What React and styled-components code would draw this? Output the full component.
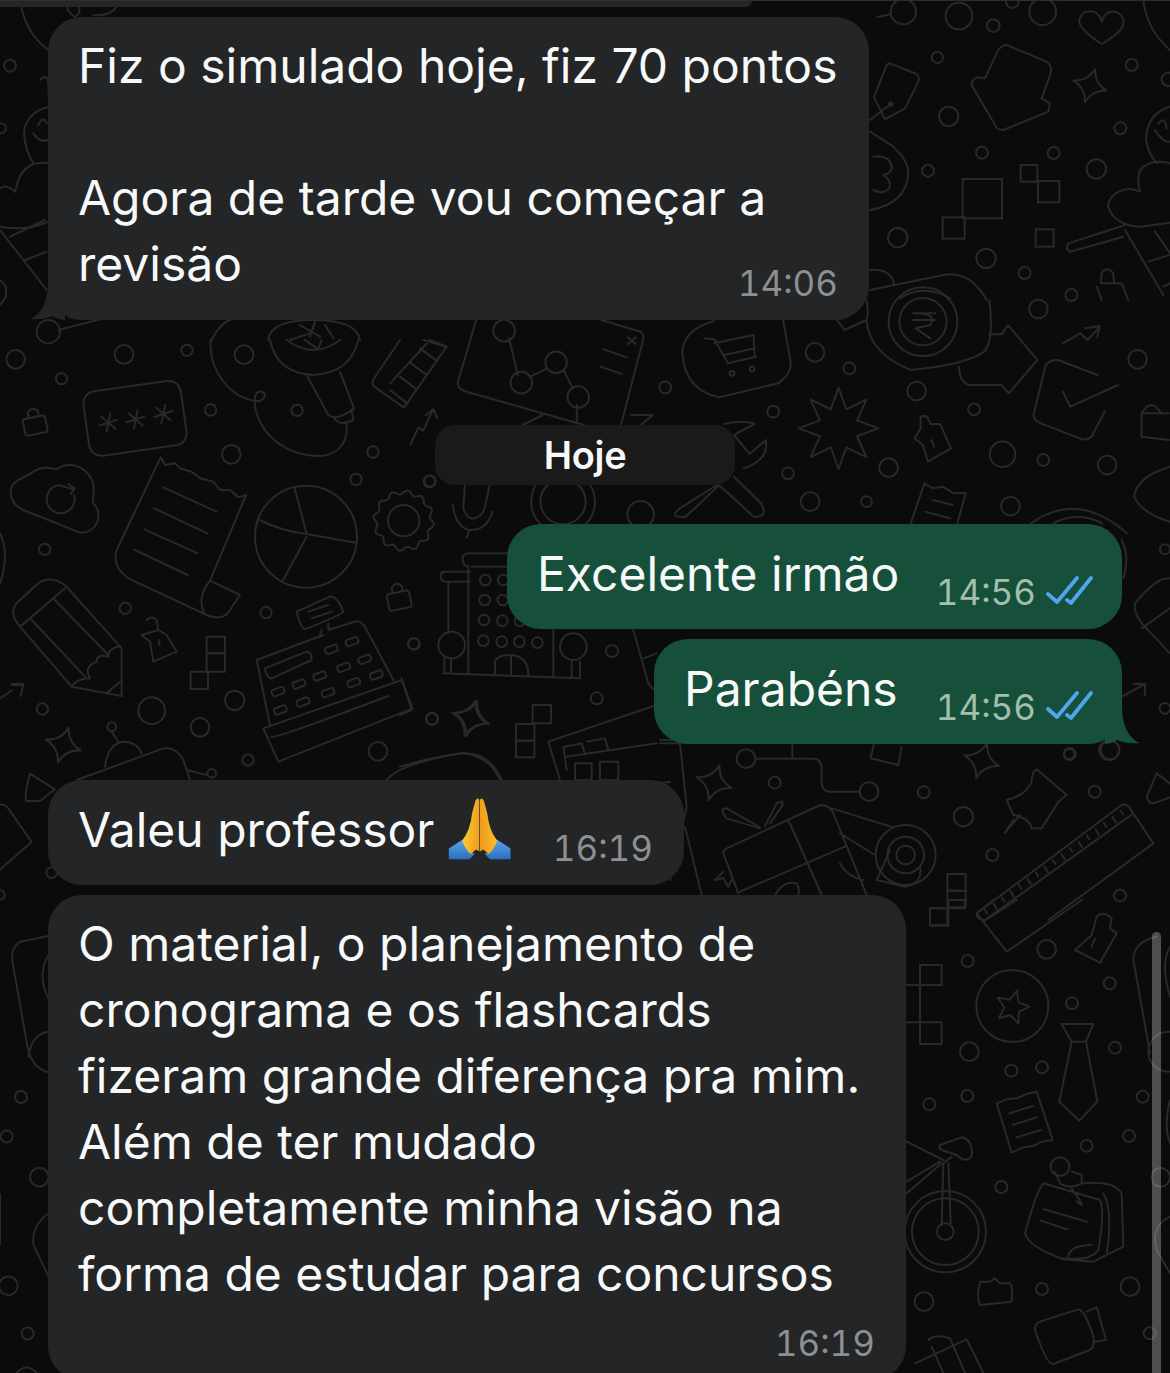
import React from "react";
import styled, { createGlobalStyle } from "styled-components";

const Global = createGlobalStyle`
  html, body { margin: 0; padding: 0; background: #0b0b0c; }
`;

const Page = styled.div`
  position: relative;
  width: 1170px;
  height: 1373px;
  overflow: hidden;
  background: #0b0b0c;
  font-family: Inter, "Liberation Sans", sans-serif;
  color: #fff;
`;

const Wallpaper = styled.svg`
  position: absolute;
  inset: 0;
  width: 1170px;
  height: 1373px;
  fill: none;
  stroke: #29292a;
  stroke-width: 2;
  stroke-linecap: round;
  stroke-linejoin: round;
  * { vector-effect: non-scaling-stroke; }
`;

const Chat = styled.main`
  position: relative;
  display: flex;
  flex-direction: column;
  padding: 0 48px;
  border-top: 1px solid #2e2e30;
`;

const PreviousEdge = styled.div`
  width: 752px;
  height: 6px;
  margin-left: -48px;
  background: #232527;
  border-radius: 0 0 24px 0;
`;

const Bubble = styled.article`
  position: relative;
  box-sizing: border-box;
  width: ${(p) => p.$w}px;
  margin-top: ${(p) => p.$top}px;
  align-self: ${(p) => (p.$out ? "flex-end" : "flex-start")};
  padding: ${(p) => (p.$pt ? p.$pt : 17)}px ${(p) => (p.$out ? 29 : 31)}px ${(p) => p.$pb || 22}px 31px;
  background: ${(p) => (p.$out ? "#16503a" : "#232527")};
  border-radius: 34px;
`;

const Line = styled.div`
  font-size: 48px;
  line-height: 66px;
  height: 66px;
  margin-left: -1px;
  white-space: nowrap;
  color: #f7f8f8;
`;

const Row = styled.div`
  display: flex;
  justify-content: space-between;
  align-items: flex-end;
`;

const MetaRow = styled.div`
  display: flex;
  justify-content: flex-end;
  margin-top: 18px;
`;

const Meta = styled.div`
  display: flex;
  align-items: center;
  gap: 10px;
  height: 36px;
  margin-bottom: ${(p) => p.$drop || 0}px;
`;

const Time = styled.span`
  font-size: 35px;
  line-height: 36px;
  font-variant-numeric: tabular-nums;
  letter-spacing: 0;
  color: ${(p) => (p.$out ? "#a2bfae" : "#8d8f90")};
`;

const Ticks = styled.svg`
  width: 47px;
  height: 30px;
  margin-top: -4px;
  fill: none;
  stroke: #4fa6ec;
  stroke-width: 3.8;
  stroke-linecap: round;
  stroke-linejoin: round;
`;

const Tail = styled.svg`
  position: absolute;
  bottom: 0;
  width: 34px;
  height: 40px;
  ${(p) => (p.$right ? "right: -17px;" : "left: -17px;")}
  fill: ${(p) => (p.$right ? "#16503a" : "#232527")};
`;

const DayPill = styled.div`
  align-self: center;
  box-sizing: border-box;
  width: 300px;
  height: 60px;
  margin-top: 105px;
  margin-bottom: 39px;
  border-radius: 20px;
  background: #1a1a1b;
  display: flex;
  align-items: center;
  justify-content: center;
  font-size: 38px;
  font-weight: 600;
  letter-spacing: -0.3px;
  color: #f7f8f8;
`;

const Emoji = styled.svg`
  width: 65px;
  height: 63px;
  margin-left: 13px;
  flex: none;
  align-self: flex-start;
`;

const TextGroup = styled.div`
  display: flex;
  align-items: flex-start;
`;

const ScrollThumb = styled.div`
  position: absolute;
  left: 1152px;
  top: 932px;
  width: 9px;
  height: 460px;
  border-radius: 5px 5px 0 0;
  background: rgba(255, 255, 255, 0.28);
`;

/* ---------- doodle helpers ---------- */
const burst = (cx, cy, R, r, n, rot = 0, squeeze = 1) => {
  let s = "";
  for (let i = 0; i < n * 2; i++) {
    const a = rot + (i * Math.PI) / n;
    const q = i % 2 ? r : R;
    s += `${i ? "L" : "M"}${(cx + squeeze * q * Math.cos(a)).toFixed(1)} ${(cy + q * Math.sin(a)).toFixed(1)} `;
  }
  return s + "Z ";
};
const gear = (cx, cy, R, amp, n) => {
  let s = "";
  for (let i = 0; i <= 180; i++) {
    const a = (i / 180) * Math.PI * 2;
    const q = R + amp * Math.sin(a * n);
    s += `${i ? "L" : "M"}${(cx + q * Math.cos(a)).toFixed(1)} ${(cy + q * Math.sin(a)).toFixed(1)} `;
  }
  return s + "Z ";
};
const spark = (cx, cy, s, rot = 0.2) => {
  let out = "";
  for (let i = 0; i < 4; i++) {
    const a = rot + (i * Math.PI) / 2;
    const b = a + Math.PI / 2;
    const x1 = cx + s * Math.cos(a), y1 = cy + s * Math.sin(a);
    const x2 = cx + s * Math.cos(b), y2 = cy + s * Math.sin(b);
    const mx = cx + s * 0.2 * Math.cos(a + Math.PI / 4) * 1.4, my = cy + s * 0.2 * Math.sin(a + Math.PI / 4) * 1.4;
    out += `${i ? "" : `M${x1.toFixed(1)} ${y1.toFixed(1)} `}Q${mx.toFixed(1)} ${my.toFixed(1)} ${x2.toFixed(1)} ${y2.toFixed(1)} `;
  }
  return out + "Z ";
};
const rrect = (x, y, w, h, r, tilt) => {
  const c = Math.cos(tilt), sn = Math.sin(tilt);
  const T = (a, b) => `${(x + a * c - b * sn).toFixed(1)} ${(y + a * sn + b * c).toFixed(1)}`;
  const W = w / 2, H = h / 2;
  return `M${T(-W + r, -H)} L${T(W - r, -H)} Q${T(W, -H)} ${T(W, -H + r)} L${T(W, H - r)} Q${T(W, H)} ${T(W - r, H)} L${T(-W + r, H)} Q${T(-W, H)} ${T(-W, H - r)} L${T(-W, -H + r)} Q${T(-W, -H)} ${T(-W + r, -H)} Z `;
};
const lock = (x, y, k = 1, tilt = -0.2) => {
  const c = Math.cos(tilt), sn = Math.sin(tilt);
  const T = (a, b) => `${(x + k * (a * c - b * sn)).toFixed(1)} ${(y + k * (a * sn + b * c)).toFixed(1)}`;
  return rrect(x + k * 4 * sn * -1, y + k * 8, 80 * k, 60 * k, 10 * k, tilt) + `M${T(-18, -22)} L${T(-18, -42)} Q${T(0, -62)} ${T(18, -42)} L${T(18, -22)} `;
};
const aster = (x, y, r) => {
  let s = "";
  for (let i = 0; i < 3; i++) {
    const a = -0.2 + (i * Math.PI) / 3;
    s += `M${(x - r * Math.sin(a)).toFixed(1)} ${(y - r * Math.cos(a)).toFixed(1)} L${(x + r * Math.sin(a)).toFixed(1)} ${(y + r * Math.cos(a)).toFixed(1)} `;
  }
  return s;
};
const rulerTicks = () => {
  let s = "";
  for (let i = 0; i < 17; i++) {
    const x = 975 + i * 25.5, y = 510 - i * 18.6;
    s += `M${x.toFixed(1)} ${y.toFixed(1)} l${i % 2 ? 10 : 7} ${i % 2 ? 16 : 11} `;
  }
  return s;
};

const Layer = ({ x, y, sx, sy, d, c = [], r = [] }) => {
  const vert = sy || sx;
  return (
    <g transform={`translate(${x} ${y}) scale(${sx} ${vert})`}>
      <path d={d} />
      {c.map(([cx, cy, rr], i) => (
        <ellipse key={"c" + i} cx={cx} cy={cy} rx={rr} ry={(rr * sx) / vert} />
      ))}
      {r.map(([rx, ry, w, h, rot], i) => (
        <rect key={"r" + i} x={rx} y={ry} width={w} height={h} rx={rot === undefined ? 0 : 7} transform={rot ? `rotate(${rot} ${rx + w / 2} ${ry + h / 2})` : undefined} />
      ))}
    </g>
  );
};

const keys = [
  [815, 1045, -20], [878, 1022, -20], [940, 998, -20], [1012, 972, -20], [1075, 948, -20], [975, 918, -20], [1037, 895, -20],
  [822, 1100, -20], [890, 1076, -20], [965, 1048, -20], [1042, 1018, -20], [1110, 995, -20],
].map(([a, b, t]) => [a, b, 38, 20, t]);

const DOODLES = [
  { /* left top */
    x: 0, y: 0, sx: 1 / 3,
    d: "M60 0 Q75 100 145 150 M195 0 Q200 40 225 50 Q245 40 235 15 M280 45 Q330 50 350 20 M145 320 Q75 340 72 400 Q75 450 100 490 M100 400 Q120 430 145 420 M115 375 Q130 345 140 370 M145 490 Q80 480 55 540 L45 575 Q15 550 0 565 M0 680 Q80 695 145 665 M0 690 L140 870 M30 710 L135 660 M75 780 L140 755 M0 840 L18 860 L18 890 L0 915 M120 240 Q150 210 145 280 M175 990 L330 950 M635 1020 Q660 970 690 960 M805 1020 Q810 960 940 960 Q1070 960 1080 1020 M870 1020 L930 1000 M900 975 L960 1010 M945 965 L930 1010 M975 975 L1000 1015",
    c: [[30, 197, 18], [3, 385, 15], [145, 995, 35]],
  },
  { /* left middle */
    x: 0, y: 340, sx: 1 / 3,
    d:
      lock(105, 250, 0.85) +
      rrect(405, 235, 295, 195, 42, -0.14) +
      aster(325, 248, 28) + aster(407, 238, 28) + aster(490, 222, 28) +
      "M632 0 C625 90 690 175 770 183 C790 185 805 160 785 155 C760 150 760 190 770 220 C790 290 860 345 950 348 C1000 350 1045 320 1040 255 " +
      "M810 0 Q830 100 940 105 Q1050 100 1075 0 M860 0 Q940 60 1020 0 M915 0 L950 25 M965 0 L955 25 M920 105 L985 225 Q1010 245 1062 205 L1020 95 M1000 230 Q1015 262 1060 240 L1055 210 " +
      "M1200 0 L1122 115 Q1112 135 1130 145 L1212 203 L1340 20 L1290 0 M1170 130 L1290 0 M1222 190 L1170 150 M1250 148 L1200 110 M1280 105 L1230 68 M1310 62 L1260 25 M1340 20 L1270 0 " +
      "M1232 312 L1255 262 L1270 272 L1298 210 M1278 225 L1300 207 L1312 235 " +
      "M100 395 C130 375 160 385 170 388 C200 365 260 370 280 430 C285 460 275 480 280 490 C310 520 295 580 240 578 L70 510 C25 490 20 440 55 420 C75 410 85 405 100 395 Z " +
      "M222 465 A42 42 0 1 1 175 436 L222 448 M205 432 L224 445 L212 462 " +
      "M482 352 L350 630 Q335 680 385 715 L620 825 Q670 845 690 810 L720 765 L630 722 Q590 770 612 820 M630 722 L738 465 L715 472 L690 450 L660 450 L640 425 L600 415 L575 395 L540 385 L525 370 L495 375 L482 352 " +
      "M490 442 L650 515 M462 505 L622 580 M433 568 L593 640 M405 630 L563 705 " +
      "M884 445 L920 582 M778 540 Q850 575 920 582 L1068 608 M920 590 L848 722 " +
      gear(1211, 542, 85, 6, 12) +
      "M1395 435 L1390 505 Q1400 540 1425 535 Q1450 525 1455 500 L1470 430 M1358 495 Q1370 570 1415 570 Q1460 570 1478 515 M1408 570 L1400 592 " +
      lock(1197, 775, 0.85, -0.2) +
      "M60 860 L215 1040 L365 1068 L365 925 L195 735 Q150 705 115 730 L50 790 Q25 820 60 860 M95 840 L255 1010 M160 775 L325 945 M195 745 L60 860 M215 1040 Q230 1015 270 1015 Q250 980 290 965 Q290 940 325 950 Q325 925 360 918 M320 1060 L360 1025 " +
      "M0 1075 L35 1052 M35 1032 L70 1032 L62 1068 M35 1035 L68 1035 " +
      "M440 840 Q455 825 470 840 L475 870 L500 885 L530 935 L460 965 L450 905 L425 885 L475 870 M478 900 L478 915 " +
      "M770 960 L970 885 M985 870 L1070 843 Q1085 845 1095 860 L1180 1020 M770 960 L810 1155 M890 815 L990 770 Q1010 765 1030 815 Q1025 825 915 868 Q900 860 890 815 M925 815 L985 795 M935 835 L995 815 M965 870 L960 885 M985 850 L985 870 " +
      "M795 985 L920 935 Q935 935 935 960 L815 1015 Q800 1015 795 985 " +
      "M790 1165 L1205 1020 L1238 1105 L835 1265 Z M815 1190 Q825 1197 1165 1068 " +
      spark(190, 1215, 55, 0.3) + spark(1410, 1135, 55, 0.3) +
      "M315 1280 Q325 1210 370 1205 Q410 1205 425 1240 M230 1320 L490 1225 Q530 1220 550 1260 L570 1320 M335 1175 L355 1205 M560 1290 L620 1305 M1160 1320 Q1200 1270 1390 1238 Q1470 1250 1500 1320 M0 580 Q30 640 0 730",
    c: [
      [47, 58, 28], [372, 43, 28], [185, 116, 17], [561, 31, 17], [732, 44, 28], [632, 210, 17], [891, 211, 17], [694, 343, 28], [1119, 336, 17], [1068, 418, 17], [1290, 423, 17], [134, 628, 17], [376, 805, 17], [798, 818, 17], [1241, 911, 17], [127, 1107, 17], [455, 1112, 40], [704, 1081, 29], [600, 1162, 28], [1296, 1136, 17], [1134, 1234, 28], [744, 1260, 17], [335, 1160, 13], [918, 590, 153], [1211, 542, 47], [635, 1300, 13],
    ],
    r: [[620, 890, 55, 50], [620, 940, 55, 55], [572, 995, 52, 52], ...keys],
  },
  { /* right top */
    x: 850, y: 0, sx: 1 / 3,
    d:
      "M82 52 L122 42 M755 132 C700 95 680 70 690 55 C700 25 745 25 755 65 C765 25 810 25 820 60 C825 85 800 105 755 132 Z " +
      "M120 190 L200 222 Q210 232 205 245 L165 325 L105 358 L72 292 L108 200 Q112 190 120 190 Z M60 360 L122 312 " +
      "M470 135 L590 185 Q610 200 600 225 L575 295 L600 310 L595 335 L460 390 Q440 390 435 375 L365 255 Q365 235 385 232 L405 235 L440 160 Q450 135 470 135 Z " +
      spark(720, 257, 52, 0.3) +
      "M60 395 L130 440 Q175 480 175 520 Q170 610 60 630 M70 470 Q120 465 125 500 Q125 520 100 525 Q125 540 118 565 Q100 585 70 570 " +
      "M960 320 Q890 340 888 420 Q895 460 920 490 M915 390 Q940 430 960 425 M925 372 Q945 345 950 385 M960 490 Q900 475 870 510 Q860 540 870 575 C820 550 770 590 775 620 C785 660 830 680 870 680 L960 668 " +
      "M655 730 L825 675 M660 755 L820 710 M655 730 Q645 750 660 755 M825 690 L940 885 M915 695 L960 760 M895 785 L960 765 M940 860 L960 850 " +
      "M755 850 H815 L835 900 M740 860 L755 900 M752 850 L755 820 Q770 795 790 820 L792 850 " +
      "M880 0 Q890 90 960 150 M60 870 L280 825 Q360 810 410 900 M60 810 Q120 805 132 850 M150 895 Q220 850 300 895",
    c: [[160, 35, 38], [327, 48, 40], [430, 77, 19], [487, 5, 19], [578, 35, 40], [262, 172, 17], [845, 195, 18], [296, 349, 29], [811, 385, 18], [396, 458, 18], [611, 459, 18], [234, 512, 18], [739, 507, 29], [143, 713, 29], [408, 775, 29], [524, 819, 18], [664, 885, 18], [955, 238, 20], [122, 312, 5]],
    r: [[338, 537, 118, 118], [278, 652, 66, 64], [512, 495, 50, 50], [564, 543, 64, 64], [557, 688, 54, 52]],
  },
  { /* band behind the day pill */
    x: 400, y: 300, sx: 770 / 1568, sy: 1 / 3,
    d:
      "M155 60 L118 245 Q115 265 135 275 L375 375 M222 115 L240 225 M265 230 L300 205 M333 210 L352 265 M360 315 V370 M410 60 L490 95 Q498 105 495 120 L450 375 M415 148 L462 172 M408 200 L452 222 M464 112 L480 132 M480 112 L464 132 M290 345 L250 375 M470 345 L515 345 L490 375 " +
      "M640 62 Q575 90 575 160 Q580 270 650 292 L770 250 Q800 220 795 180 L780 60 M620 115 L640 118 L668 190 L725 170 M640 130 L720 105 L722 165 M660 165 L722 145 " +
      "M950 60 Q955 160 1040 210 Q1150 195 1190 155 Q1210 120 1200 0 M1045 40 H1090 M1045 60 H1090 M1050 40 Q1095 40 1080 75 L1050 85 L1080 115 M950 0 Q955 40 950 60 L905 90 L890 60 " +
      "M1200 103 H1225 L1238 75 L1298 180 L1240 280 L1225 255 H1160 Q1140 250 1138 200 M1350 130 L1385 100 L1400 120 L1425 80 M1395 85 L1425 78 L1420 110 " +
      "M1420 225 L1340 180 Q1325 178 1315 195 L1290 345 Q1290 360 1305 370 L1390 418 Q1405 420 1410 405 L1435 335 M1350 275 L1365 320 L1462 255 " +
      burst(893, 385, 122, 62, 8, -Math.PI / 2, 0.66) +
      "M1060 350 Q1075 340 1080 372 L1100 372 L1122 445 L1075 485 L1065 435 L1048 415 L1060 385 Z M1082 420 L1088 440 " +
      "M1510 340 Q1530 290 1550 340 M1510 340 H1566 M1510 340 V410 L1566 420 " +
      "M660 372 Q700 358 722 372 L680 405 L712 462 L745 420 Q752 480 700 505 M645 555 L570 625 Q545 655 582 650 L650 555 L720 650 Q752 652 735 610 L680 530 " +
      "M1068 550 L1040 670 M1152 580 L1135 670 M1068 550 L1085 565 L1105 560 L1125 578 L1152 580 M1085 600 L1125 615 M1070 635 L1120 655 " +
      "M1285 670 Q1380 570 1480 700 M1330 670 Q1380 630 1430 670 M1568 500 Q1500 530 1495 590 Q1510 640 1568 665 ",
    c: [[212, 92, 22], [318, 187, 22], [247, 248, 22], [363, 291, 22], [845, 157, 19], [915, 205, 12], [540, 262, 12], [760, 335, 12], [1052, 273, 19], [1169, 328, 12], [1227, 463, 26], [1310, 480, 12], [1440, 495, 19], [995, 503, 19], [790, 520, 12], [835, 605, 19], [950, 605, 11], [1243, 618, 19], [490, 643, 27], [60, 545, 12], [1300, 27, 19], [1502, 178, 19], [1065, 65, 70], [1065, 65, 48], [676, 220, 5], [717, 207, 5], [332, 605, 65], [332, 605, 46]],
  },
  { /* behind the outgoing bubbles, left */
    x: 400, y: 530, sx: 1 / 3,
    d:
      "M130 430 L540 445 M205 110 V430 M215 110 H325 M325 70 H205 Q185 72 188 90 Q190 108 205 110 M125 125 H210 M210 155 H135 Q120 150 123 135 Q125 125 135 125 M145 155 V310 M133 385 V430 M153 385 V430 M285 430 V395 Q290 375 335 375 Q385 380 385 435 M333 378 V435 M460 300 V440 M540 440 V395 M515 395 V440 M700 300 L745 460 Q755 475 765 480 M730 385 L770 370 " +
      spark(215, 565, 55, 0.3) +
      "M445 635 L770 525 M445 635 L480 750 M498 680 L770 640 M495 650 L545 640 L555 672 M560 635 L615 625 L625 660 M490 650 L500 720 M0 710 Q100 680 195 670 Q270 670 305 750 M0 555 L35 540 L5 445",
    c: [[256, 150, 16], [310, 150, 16], [254, 210, 16], [308, 210, 16], [252, 270, 16], [307, 272, 16], [360, 272, 16], [250, 332, 16], [305, 335, 16], [358, 335, 16], [412, 338, 16], [155, 345, 40], [520, 350, 40], [42, 342, 17], [636, 363, 18], [590, 505, 18], [96, 567, 18]],
    r: [[398, 525, 55, 55], [348, 582, 55, 50], [348, 632, 55, 50], [525, 700, 50, 50], [600, 695, 55, 55]],
  },
  { /* right of the outgoing bubbles */
    x: 900, y: 540, sx: 1 / 3,
    d: "M810 115 Q770 110 705 190 Q700 215 725 250 L810 340 M725 265 L810 205 M665 470 L735 432 M700 432 H735 V465 M665 0 Q690 50 670 115",
    c: [[795, 28, 15], [795, 505, 16], [630, 630, 28], [508, 642, 15]],
  },
  { /* between the bubbles, lower */
    x: 660, y: 740, sx: 1 / 3,
    d:
      "M285 56 H465 Q485 60 485 90 V130 Q488 155 510 155 H600 M397 10 V50 M642 10 L632 55 L715 75 L725 20 " +
      spark(162, 128, 55, 0.3) + spark(965, 62, 55, 0.3) +
      "M190 340 L235 460 M200 325 L480 195 Q510 195 520 220 L620 465 M385 240 L485 465 M240 455 L555 320 M190 340 Q192 328 200 325 M300 265 L200 235 Q175 205 200 205 L300 262 M315 258 L350 190 Q375 175 365 200 L330 250 M190 395 L165 420 L190 415 L205 440 L215 420 " +
      "M515 205 L700 262 M540 280 L645 345 M650 420 L735 440 Q790 430 780 380 M650 420 L690 330 M540 370 Q560 410 610 420 M345 465 Q370 420 410 430 Q420 445 415 465 " +
      "M1130 88 L1220 165 L1195 185 L1145 265 L1115 265 Q1110 235 1060 225 L1040 180 Q1100 165 1115 125 Q1115 95 1130 88 Z M1035 278 L1080 225 M1035 278 L1060 240 " +
      "M950 520 L1385 195 Q1400 190 1410 205 L1480 310 L1165 540 M975 540 Q950 540 950 520 M975 540 L1420 220 " + rulerTicks() +
      "M1490 100 L1460 170 Q1465 190 1480 190 L1530 172 M1490 100 L1530 130 M0 130 L30 125 M80 0 H0 M60 10 L80 200 L30 420 M75 260 L125 465 M0 10 H55",
    c: [[258, 56, 28], [627, 155, 28], [344, 128, 18], [791, 157, 18], [1229, 42, 18], [1348, 30, 30], [1304, 155, 18], [910, 230, 29], [997, 345, 18], [1380, 467, 18], [737, 345, 90], [737, 345, 55], [737, 345, 28]],
    r: [[862, 402, 55, 50], [862, 452, 55, 50], [810, 505, 52, 50]],
  },
  { /* right bottom */
    x: 900, y: 900, sx: 1 / 3,
    d:
      "M20 255 H60 V367 M20 367 H60 M230 40 L320 155 L545 0 M250 65 L350 0 M230 40 L280 0 " +
      burst(337, 322, 52, 24, 5, -1.3) +
      "M590 50 Q610 30 635 55 L630 85 L650 100 L600 188 L525 150 L575 105 Z M585 115 L575 140 " +
      "M485 372 H580 L558 425 H515 Z M515 425 L478 605 L538 662 L592 605 L558 425 " +
      "M290 610 L320 598 L350 595 L380 582 L410 575 L458 720 L425 725 L400 738 L370 742 L335 758 Z M328 640 L398 618 M338 675 L410 652 M350 712 L422 690 " +
      "M20 725 L130 780 M20 880 L125 790 M20 845 L120 785 M120 735 L185 712 Q220 720 215 770 Q195 790 170 765 L125 750 Q115 745 120 735 Z M155 770 L130 790 L125 975 M145 790 L152 970 " +
      "M430 850 Q410 870 375 1000 Q385 1040 490 1078 L580 1085 Q630 1060 670 1040 L665 880 Q640 840 550 850 M430 850 L600 900 Q615 930 595 1050 Q570 1085 490 1075 M610 880 Q640 930 620 1060 M432 928 L562 965 M422 962 L502 988 M505 1070 Q510 1035 575 1035 M465 815 L480 850 Q510 870 545 850 L545 825 L515 815 M515 865 L545 910 M530 905 L545 915 " +
      "M240 1145 H270 L285 1135 L300 1150 H330 Q340 1160 335 1205 L240 1215 Q228 1190 240 1145 Z " +
      "M420 1265 L535 1228 Q555 1230 580 1310 Q585 1340 570 1350 L460 1392 Q440 1395 405 1290 Q405 1270 420 1265 M560 1235 L590 1222 L618 1320 L585 1325 " +
      "M45 1390 L200 1318 L250 1419 M85 1320 Q105 1300 150 1315 L195 1419 M95 1340 L130 1419 " +
      "M700 180 Q700 125 770 110 M700 180 L750 460 M810 140 Q780 190 810 290 M810 600 Q790 680 810 730 M810 950 Q750 980 770 1050 L810 1120",
    c: [[440, 148, 28], [203, 183, 18], [629, 250, 18], [516, 310, 18], [208, 455, 28], [645, 443, 18], [334, 512, 18], [426, 502, 18], [202, 588, 18], [88, 613, 18], [728, 590, 18], [687, 708, 18], [560, 737, 18], [304, 861, 18], [426, 1167, 18], [690, 1160, 28], [72, 1205, 28], [749, 1300, 18], [337, 318, 108], [136, 995, 25], [136, 995, 100], [136, 995, 122], [480, 800, 28], [805, 455, 60], [782, 832, 28]],
    r: [[90, 25, 55, 52], [145, 0, 50, 25], [60, 195, 65, 60], [60, 367, 65, 65]],
  },
  { /* left lower */
    x: 0, y: 760, sx: 1 / 3, sy: 1 / 2.558,
    d: "M90 35 L165 75 L120 105 L80 105 Q70 95 90 35 M0 115 Q15 110 30 130 L95 210 L0 280 M145 450 L60 465 Q30 480 38 520 L80 720 Q90 790 150 800 M145 500 Q110 550 145 610 M85 760 Q95 700 145 695 M0 1110 V1240 M145 1160 Q95 1190 100 1240 L145 1320 M50 1568 Q80 1540 110 1568",
    c: [[155, 288, 16], [0, 345, 14], [63, 862, 18], [20, 963, 18], [118, 1067, 28], [25, 1345, 28], [83, 1467, 18]],
  },
];

const DoubleCheck = () => (
  <Ticks viewBox="0 0 47 30">
    <path d="M2 19 L11 27 L31 3" />
    <path d="M21 25 L25 28 L45 3" />
  </Ticks>
);

const PrayingHands = () => (
  <Emoji viewBox="85 50 195 190">
    <defs>
      <linearGradient id="skinL" x1="0" y1="0" x2="1" y2="0.2">
        <stop offset="0" stopColor="#ffd23c" />
        <stop offset="1" stopColor="#f0a11e" />
      </linearGradient>
      <linearGradient id="skinR" x1="1" y1="0" x2="0" y2="0.2">
        <stop offset="0" stopColor="#ffc42e" />
        <stop offset="1" stopColor="#ef9d1c" />
      </linearGradient>
      <linearGradient id="sleeve" x1="0" y1="0" x2="0" y2="1">
        <stop offset="0" stopColor="#5aa6e8" />
        <stop offset="1" stopColor="#2b6fc0" />
      </linearGradient>
    </defs>
    <path fill="url(#sleeve)" d="M90 205 L132 178 Q140 205 168 222 L152 238 H90 Z" />
    <path fill="url(#sleeve)" d="M276 205 L234 178 Q226 205 198 222 L214 238 H276 Z" />
    <path fill="url(#skinL)" d="M170 62 Q176 50 182 58 L182 214 L172 208 L156 222 Q140 210 130 182 Q155 150 160 100 Z" />
    <path fill="url(#skinR)" d="M196 62 Q190 50 184 58 L184 214 L194 208 L210 222 Q226 210 236 182 Q211 150 206 100 Z" />
  </Emoji>
);

export default function App() {
  return (
    <Page>
      <Global />
      <Wallpaper viewBox="0 0 1170 1373">
        {DOODLES.map((l, i) => (
          <Layer key={i} {...l} />
        ))}
      </Wallpaper>
      <Chat>
        <PreviousEdge />
        <Bubble $w={821} $top={10} $pt={16} $pb={23}>
          <Tail viewBox="0 0 34 40">
            <path d="M17 2 Q17 30 0 39 Q12 40 22 36 Q28 40 34 40 L34 0 Z" />
          </Tail>
          <Line>Fiz o simulado hoje, fiz 70 pontos</Line>
          <Line />
          <Line>Agora de tarde vou começar a</Line>
          <Row>
            <Line>revisão</Line>
            <Meta $drop={-4}>
              <Time>14:06</Time>
            </Meta>
          </Row>
        </Bubble>

        <DayPill>Hoje</DayPill>

        <Bubble $out $w={615} $top={0}>
          <Row>
            <Line>Excelente irmão</Line>
            <Meta $drop={-3}>
              <Time $out>14:56</Time>
              <DoubleCheck />
            </Meta>
          </Row>
        </Bubble>

        <Bubble $out $w={468} $top={10}>
          <Tail $right viewBox="0 0 34 40">
            <path d="M17 2 Q17 30 34 39 Q22 40 12 36 Q6 40 0 40 L0 0 Z" />
          </Tail>
          <Row>
            <Line>Parabéns</Line>
            <Meta $drop={-3}>
              <Time $out>14:56</Time>
              <DoubleCheck />
            </Meta>
          </Row>
        </Bubble>

        <Bubble $w={636} $top={36}>
          <Row>
            <TextGroup>
              <Line>Valeu professor</Line>
              <PrayingHands />
            </TextGroup>
            <Meta $drop={-3}>
              <Time>16:19</Time>
            </Meta>
          </Row>
        </Bubble>

        <Bubble $w={858} $top={10} $pt={16} $pb={19}>
          <Line>O material, o planejamento de</Line>
          <Line>cronograma e os flashcards</Line>
          <Line>fizeram grande diferença pra mim.</Line>
          <Line>Além de ter mudado</Line>
          <Line>completamente minha visão na</Line>
          <Line>forma de estudar para concursos</Line>
          <MetaRow>
            <Meta>
              <Time>16:19</Time>
            </Meta>
          </MetaRow>
        </Bubble>
      </Chat>
      <ScrollThumb />
    </Page>
  );
}
